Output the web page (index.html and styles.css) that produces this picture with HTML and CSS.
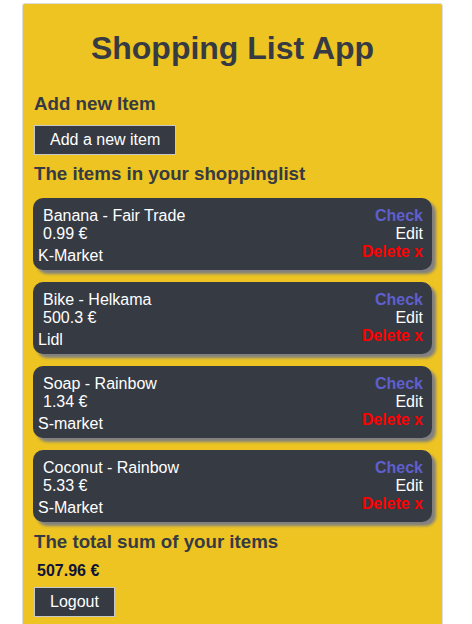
FILE: index.html
```html
<!DOCTYPE html>
<html>
<head>
<meta charset="utf-8">
<link rel="stylesheet" href="styles.css">
</head>
<body>
<div class="app">
  <h1 class="title">Shopping List App</h1>
  <h3 class="section first">Add new Item</h3>
  <button class="btn">Add a new item</button>
  <h3 class="section">The items in your shoppinglist</h3>
  <div class="list">
    <div class="card">
      <div class="info">
        <div class="line">Banana - Fair Trade</div>
        <div class="line">0.99 €</div>
        <div class="store">K-Market</div>
      </div>
      <div class="actions">
        <div class="check">Check</div>
        <div class="edit">Edit</div>
        <div class="delete">Delete x</div>
      </div>
    </div>
    <div class="card">
      <div class="info">
        <div class="line">Bike - Helkama</div>
        <div class="line">500.3 €</div>
        <div class="store">Lidl</div>
      </div>
      <div class="actions">
        <div class="check">Check</div>
        <div class="edit">Edit</div>
        <div class="delete">Delete x</div>
      </div>
    </div>
    <div class="card">
      <div class="info">
        <div class="line">Soap - Rainbow</div>
        <div class="line">1.34 €</div>
        <div class="store">S-market</div>
      </div>
      <div class="actions">
        <div class="check">Check</div>
        <div class="edit">Edit</div>
        <div class="delete">Delete x</div>
      </div>
    </div>
    <div class="card">
      <div class="info">
        <div class="line">Coconut - Rainbow</div>
        <div class="line">5.33 €</div>
        <div class="store">S-Market</div>
      </div>
      <div class="actions">
        <div class="check">Check</div>
        <div class="edit">Edit</div>
        <div class="delete">Delete x</div>
      </div>
    </div>
  </div>
  <h3 class="section total-head">The total sum of your items</h3>
  <div class="total">507.96 €</div>
  <button class="btn logout">Logout</button>
</div>
</body>
</html>
```
FILE: styles.css
```css
html, body {
  margin: 0;
  padding: 0;
  background: #ffffff;
}
body {
  font-family: "Liberation Sans", Arial, sans-serif;
}
.app {
  width: 421px;
  box-sizing: border-box;
  margin: 3px 0 0 22px;
  background: #edc421;
  border: 1px solid #dcdcdc;
  border-radius: 3px;
  padding: 4px 10px 40px 10px;
  color: #363a43;
}
.title {
  font-size: 32px;
  font-weight: bold;
  line-height: 37px;
  text-align: center;
  margin: 22px 0 0 0;
}
.section {
  font-size: 18.72px;
  font-weight: bold;
  line-height: 21px;
  margin: 8px 0 0 1px;
}
.section.first {
  margin-top: 26px;
}
.btn {
  display: block;
  font-family: "Liberation Sans", Arial, sans-serif;
  font-size: 16px;
  line-height: 18px;
  color: #ffffff;
  background: #363a43;
  border: 1px solid #c8c8c8;
  padding: 5px 15px;
  margin: 11px 0 0 1px;
  border-radius: 0;
}
.list {
  display: flex;
  flex-direction: column;
  gap: 12px;
  margin-top: 14px;
}
.card {
  display: flex;
  justify-content: space-between;
  background: #363a43;
  color: #ffffff;
  border-radius: 10px;
  box-shadow: 4px 4px 3px #808080;
  padding: 9px 9px 5px 5px;
  font-size: 16px;
  line-height: 18px;
}
.info .line {
  padding-left: 5px;
}
.info .store {
  margin-top: 4px;
}
.actions {
  text-align: right;
}
.check {
  color: #5f5fcd;
  font-weight: bold;
}
.edit {
  color: #ffffff;
}
.delete {
  color: #ff0000;
  font-weight: bold;
}
.total-head {
  margin-top: 9px;
}
.total {
  font-size: 16px;
  font-weight: bold;
  line-height: 18px;
  color: #10123a;
  margin: 10px 0 0 4px;
}
.logout {
  margin-top: 7px;
}
```
